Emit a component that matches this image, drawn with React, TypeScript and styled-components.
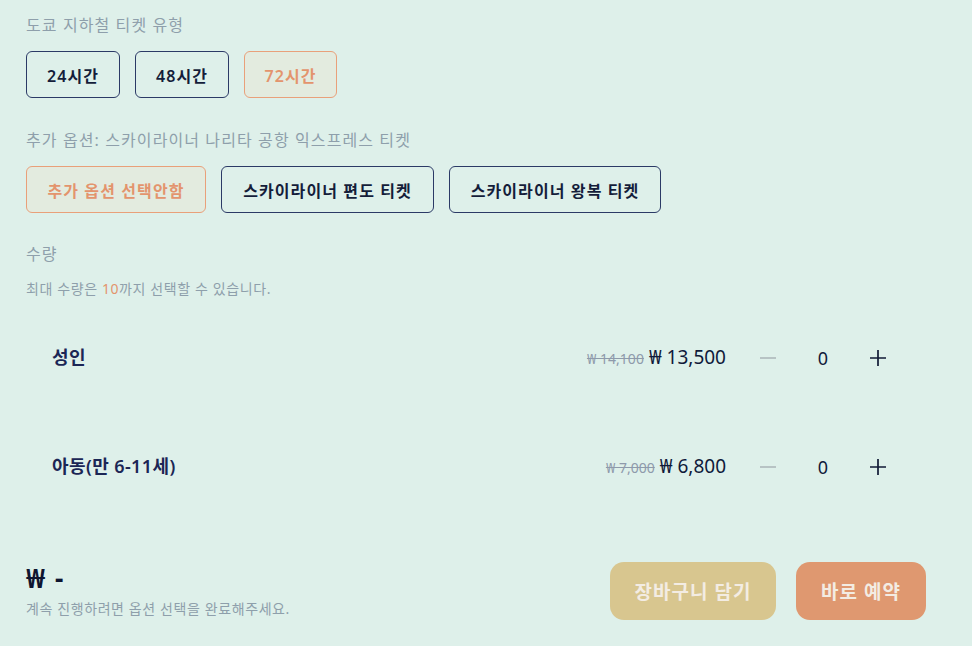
import { createGlobalStyle, styled } from 'styled-components';

const GlobalStyle = createGlobalStyle`
  html, body {
    margin: 0;
    padding: 0;
    background: #def0ea;
    font-family: 'Noto Sans', 'Noto Sans CJK KR', sans-serif;
  }
`;

const Page = styled.div`
  width: 972px;
  height: 646px;
  box-sizing: border-box;
  padding: 12px 26px 0 26px;
  background: #def0ea;
  display: flex;
  flex-direction: column;
`;

const Label = styled.div<{ gap?: number }>`
  font-size: 16px;
  line-height: 26px;
  letter-spacing: 1.1px;
  color: #8e9fab;
  margin-top: ${(p) => p.gap ?? 0}px;
`;

const ButtonRow = styled.div`
  display: flex;
  gap: 15px;
  margin-top: 13px;
`;

const OptionButton = styled.button<{ selected?: boolean; w: number }>`
  width: ${(p) => p.w}px;
  height: 47px;
  box-sizing: border-box;
  border-radius: 6px;
  border: 1px solid ${(p) => (p.selected ? '#e9a07a' : '#2b3a66')};
  background: ${(p) => (p.selected ? '#e3ebdf' : 'transparent')};
  color: ${(p) => (p.selected ? '#e3946d' : '#141d3a')};
  font-family: inherit;
  font-size: 16px;
  font-weight: 600;
  letter-spacing: 1.1px;
  padding: 0;
  cursor: pointer;
`;

const Hint = styled.div<{ gap?: number }>`
  font-size: 14px;
  line-height: 18px;
  letter-spacing: 0.6px;
  color: #8e9fab;
  margin-top: ${(p) => p.gap ?? 0}px;
`;

const Accent = styled.span`
  color: #e3946d;
`;

const Rows = styled.div`
  display: flex;
  flex-direction: column;
  margin-top: 16px;
`;

const Row = styled.div`
  height: 109px;
  display: flex;
  align-items: flex-start;
  padding: 30px 0 0 26px;
  box-sizing: border-box;
`;

const Name = styled.div`
  flex: 1;
  font-size: 18px;
  font-weight: 600;
  letter-spacing: 0.4px;
  color: #1b2655;
  line-height: 26px;
`;

const Price = styled.div`
  display: flex;
  align-items: baseline;
  gap: 5px;
  line-height: 26px;
`;

const OldPrice = styled.span`
  font-size: 14px;
  color: #8e9aab;
  text-decoration: line-through;
`;

const NewPrice = styled.span`
  font-size: 19px;
  color: #101a3a;
`;

const Stepper = styled.div`
  display: flex;
  align-items: center;
  margin-left: 22px;
  margin-right: 48px;
  height: 26px;
  margin-top: 1px;
`;

const StepBtn = styled.button<{ dim?: boolean }>`
  width: 40px;
  height: 26px;
  border: none;
  background: none;
  padding: 0;
  display: flex;
  align-items: center;
  justify-content: center;
  color: ${(p) => (p.dim ? '#b7c3c4' : '#111a36')};
`;

const Count = styled.span`
  width: 70px;
  text-align: center;
  font-size: 18px;
  color: #101a3a;
`;

const Footer = styled.div`
  display: flex;
  align-items: center;
  margin-top: 30px;
  margin-right: 20px;
`;

const Total = styled.div`
  flex: 1;
  display: flex;
  flex-direction: column;
`;

const TotalAmount = styled.div`
  font-size: 26px;
  font-weight: 700;
  color: #0e1530;
  line-height: 28px;
  word-spacing: 3px;
`;

const ActionButton = styled.button<{ bg: string; w: number }>`
  width: ${(p) => p.w}px;
  height: 58px;
  border: none;
  border-radius: 14px;
  background: ${(p) => p.bg};
  color: #f3ece3;
  font-family: inherit;
  font-size: 19px;
  font-weight: 700;
  letter-spacing: 1px;
  margin-left: 20px;
`;

const Minus = () => (
  <svg width="18" height="18" viewBox="0 0 18 18">
    <path d="M1 9h16" stroke="currentColor" strokeWidth="2" />
  </svg>
);

const Plus = () => (
  <svg width="18" height="18" viewBox="0 0 18 18">
    <path d="M1 9h16M9 1v16" stroke="currentColor" strokeWidth="1.7" />
  </svg>
);

const rows = [
  { name: '성인', old: '₩ 14,100', price: '₩ 13,500' },
  { name: '아동(만 6-11세)', old: '₩ 7,000', price: '₩ 6,800' },
];

export default function App() {
  return (
    <Page>
      <GlobalStyle />
      <Label>도쿄 지하철 티켓 유형</Label>
      <ButtonRow>
        <OptionButton w={94}>24시간</OptionButton>
        <OptionButton w={94}>48시간</OptionButton>
        <OptionButton w={93} selected>
          72시간
        </OptionButton>
      </ButtonRow>
      <Label gap={29}>추가 옵션: 스카이라이너 나리타 공항 익스프레스 티켓</Label>
      <ButtonRow>
        <OptionButton w={180} selected>
          추가 옵션 선택안함
        </OptionButton>
        <OptionButton w={213}>스카이라이너 편도 티켓</OptionButton>
        <OptionButton w={212}>스카이라이너 왕복 티켓</OptionButton>
      </ButtonRow>
      <Label gap={28}>수량</Label>
      <Hint gap={13}>
        최대 수량은 <Accent>10</Accent>까지 선택할 수 있습니다.
      </Hint>
      <Rows>
        {rows.map((r) => (
          <Row key={r.name}>
            <Name>{r.name}</Name>
            <Price>
              <OldPrice>{r.old}</OldPrice>
              <NewPrice>{r.price}</NewPrice>
            </Price>
            <Stepper>
              <StepBtn dim>
                <Minus />
              </StepBtn>
              <Count>0</Count>
              <StepBtn>
                <Plus />
              </StepBtn>
            </Stepper>
          </Row>
        ))}
      </Rows>
      <Footer>
        <Total>
          <TotalAmount>₩ -</TotalAmount>
          <Hint gap={8}>계속 진행하려면 옵션 선택을 완료해주세요.</Hint>
        </Total>
        <ActionButton w={166} bg="#d8c68f">
          장바구니 담기
        </ActionButton>
        <ActionButton w={130} bg="#df9870">
          바로 예약
        </ActionButton>
      </Footer>
    </Page>
  );
}
